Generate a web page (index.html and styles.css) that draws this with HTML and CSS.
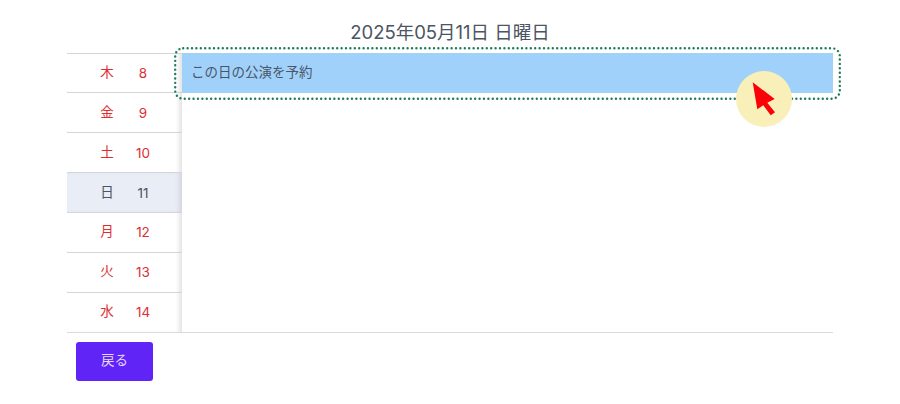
FILE: index.html
```html
<!DOCTYPE html>
<html lang="ja">
<head>
<meta charset="utf-8">
<title>公演予約</title>
<link rel="stylesheet" href="styles.css">
</head>
<body>
<div class="page">
  <h1 class="title">2025年05月11日 日曜日</h1>
  <div class="schedule">
    <ul class="days">
      <li class="day"><span>木</span><span>8</span></li>
      <li class="day"><span>金</span><span>9</span></li>
      <li class="day"><span>土</span><span>10</span></li>
      <li class="day current"><span>日</span><span>11</span></li>
      <li class="day"><span>月</span><span>12</span></li>
      <li class="day"><span>火</span><span>13</span></li>
      <li class="day"><span>水</span><span>14</span></li>
    </ul>
    <div class="main">
      <div class="book">この日の公演を予約</div>
    </div>
    <svg class="highlight" viewBox="0 0 667 53" aria-hidden="true">
      <rect x="1.2" y="1.2" width="664.6" height="50.6" rx="8" ry="8"/>
    </svg>
    <div class="pointer">
      <svg class="arrow" viewBox="0 0 56 56" aria-hidden="true">
        <path d="M16.7 11.3 L38.7 28 L31.3 31.7 L39 41.3 L34.7 44.3 L27.3 34.3 L21.3 38.3 Z" fill="#fb0007"/>
      </svg>
    </div>
  </div>
  <button class="back" type="button">戻る</button>
</div>
</body>
</html>
```
FILE: styles.css
```css
* { box-sizing: border-box; }
html, body { margin: 0; padding: 0; background: #fff; }
body {
  width: 900px;
  height: 404px;
  overflow: hidden;
  font-family: Inter, "Noto Sans CJK JP", sans-serif;
  color: #4b5563;
}
.page {
  width: 766px;
  margin-left: 67px;
  padding-top: 21px;
}
.title {
  margin: 0;
  height: 31.6px;
  font-size: 18.5px;
  line-height: 22px;
  font-weight: 400;
  text-align: center;
  color: #4b5563;
}
.schedule {
  position: relative;
  display: flex;
  height: 280px;
  border-bottom: 1px solid #d9dbde;
}
.days {
  list-style: none;
  margin: 0;
  padding: 0;
  width: 115px;
  flex: none;
  display: grid;
  grid-template-rows: repeat(7, 1fr);
  box-shadow: inset -5px 0 4px -2px #e4e4e4;
}
.day {
  display: grid;
  grid-template-columns: 36px 36px;
  align-items: center;
  padding-left: 22px;
  border-top: 1px solid #d4d5d8;
  font-size: 13.5px;
  line-height: 20px;
  text-align: center;
  color: #dc2f34;
}
.day span:first-child { padding-bottom: 2px; }
.day.current {
  background: #e8edf6;
  color: #4b5563;
  box-shadow: inset -5px 0 4px -2px #d3d6dc;
}
.main { flex: 1; }
.book {
  height: 40px;
  padding: 0 0 2px 9px;
  display: flex;
  align-items: center;
  background: #9fd1fb;
  font-size: 13.5px;
  line-height: 20px;
  color: #4b5563;
}
.highlight {
  position: absolute;
  left: 107px;
  top: -6px;
  width: 667px;
  height: 53px;
  fill: none;
  stroke: #1f7a57;
  stroke-width: 2.4;
  stroke-linecap: round;
  stroke-dasharray: 0 4.4;
}
.pointer {
  position: absolute;
  left: 669px;
  top: 18px;
  width: 56px;
  height: 56px;
  border-radius: 50%;
  background: #f9efb9;
}
.arrow { display: block; width: 56px; height: 56px; }
.back {
  display: block;
  margin: 9.4px 0 0 9px;
  width: 77px;
  height: 39px;
  padding: 0 0 2px;
  border: 0;
  border-radius: 3px;
  background: #6124f6;
  color: #e6d8ff;
  font: 13.5px/20px Inter, "Noto Sans CJK JP", sans-serif;
}
```
